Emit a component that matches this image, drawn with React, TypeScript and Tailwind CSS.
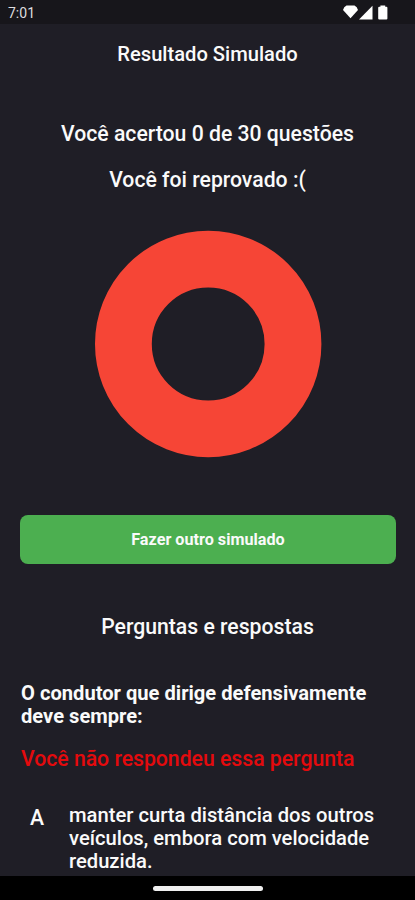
import React from 'react';

interface Answer {
  letter: string;
  text: string;
}

interface Question {
  title: string;
  answers: Answer[];
}

const score = { correct: 0, total: 30 };

const question: Question = {
  title: 'O condutor que dirige defensivamente deve sempre:',
  answers: [
    {
      letter: 'A',
      text: 'manter curta distância dos outros veículos, embora com velocidade reduzida.'
    }
  ]
};

const StatusBar = () => (
  <div className="flex h-6 shrink-0 items-center justify-between bg-[#17161b] pl-2 pr-[27px] pt-[2px]">
    <span className="text-[14px] leading-[22px] text-[#dddddf]">7:01</span>
    <svg width="46" height="16" viewBox="0 0 46 16" className="-mt-[2px] fill-white">
      <path d="M8.5 14.3 1 6.1Q1.8 2.6 4.5 1.6h8q2.7 1 3.5 4.5Z" />
      <path d="M30.5 1.8v13.6H17Z" />
      <path d="M36.2 3.8q0-1 1-1h1.2V1.4h4.8v1.4h1.2q1 0 1 1v10.8q0 1-1 1h-7.2q-1 0-1-1Z" />
    </svg>
  </div>
);

const ResultChart = () => (
  <svg width="228" height="228" viewBox="0 0 228 228" className="mx-auto mt-[37px] shrink-0">
    <circle cx="114.2" cy="114" r="84.8" fill="none" stroke="#f64536" strokeWidth="56.8" />
  </svg>
);

const QuestionItem = ({ title, answers }: Question) => (
  <section className="mt-[42px] pl-[21px]">
    <h3 className="w-[360px] text-[20.15px] font-bold leading-[23px]">{title}</h3>
    <p className="mt-[18px] text-[21.2px] font-medium leading-[26px] text-[#e40a0d]">
      Você não respondeu essa pergunta
    </p>
    {answers.map((answer) => (
      <div key={answer.letter} className="mt-[32px] flex">
        <span className="w-[48px] pl-[9px] pt-[2px] text-[21.2px] font-medium leading-[24px]">{answer.letter}</span>
        <p className="w-[320px] text-[20.2px] font-medium leading-[23px]">{answer.text}</p>
      </div>
    ))}
  </section>
);

const App = () => {
  return (
    <div className="flex h-[900px] w-[415px] flex-col overflow-hidden bg-[#1f1e26] font-['Roboto',sans-serif] text-[#fafafa]">
      <StatusBar />
      <main className="flex min-h-0 flex-1 flex-col overflow-hidden">
        <h1 className="mt-[17px] text-center text-[20.15px] font-medium leading-[26px]">Resultado Simulado</h1>
        <p className="mt-[54px] text-center text-[21.2px] font-medium leading-[26px]">
          {`Você acertou ${score.correct} de ${score.total} questões`}
        </p>
        <p className="mt-[20px] text-center text-[21.2px] font-medium leading-[26px]">Você foi reprovado :(</p>
        <ResultChart />
        <button className="ml-5 mr-[19px] mt-[57px] h-[49px] shrink-0 rounded-lg bg-[#4caf50] text-[16.2px] font-bold leading-[20px]">
          Fazer outro simulado
        </button>
        <h2 className="mt-[50px] text-center text-[21.2px] font-medium leading-[26px]">Perguntas e respostas</h2>
        <QuestionItem {...question} />
      </main>
      <div className="flex h-6 shrink-0 justify-center bg-black pt-[10px]">
        <div className="h-[5px] w-[110px] rounded-full bg-[#f0f0f0]" />
      </div>
    </div>
  );
};

export default App;
